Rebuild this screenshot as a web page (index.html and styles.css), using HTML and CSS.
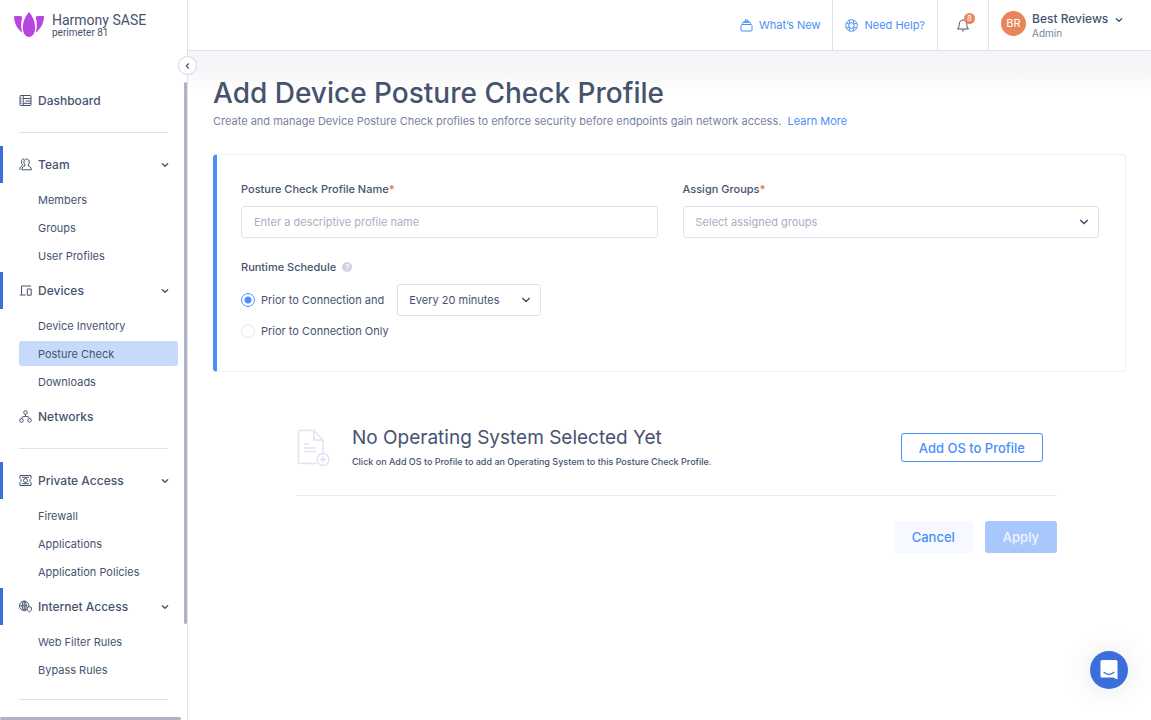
FILE: index.html
```html
<!DOCTYPE html>
<html lang="en">
<head>
<meta charset="utf-8">
<meta name="viewport" content="width=device-width, initial-scale=1">
<title>Add Device Posture Check Profile</title>
<link rel="stylesheet" href="styles.css">
</head>
<body>
<svg width="0" height="0" class="defs" aria-hidden="true">
  <symbol id="chevron" viewBox="0 0 10 10"><path d="M2.300 3.700 5 6.300 7.700 3.700" fill="none" stroke="currentColor" stroke-width="1.300" stroke-linecap="round" stroke-linejoin="round"/></symbol>
</svg>
<div class="app">
  <aside class="sidebar">
    <div class="brand">
      <svg class="brand-mark" viewBox="0 0 30 26" aria-hidden="true">
        <g fill="#b845e0">
          <path d="M15 0C18 3.500 21.200 9 21.200 16c0 5-2.800 9-6.200 9s-6.200-4-6.200-9C8.800 9 12 3.500 15 0z"/>
          <path d="M0 4.300c2.400-.3 5-.3 8 .3v1.800C7 10 6.600 14.500 8.200 20.600 3.500 17 .2 12 0 4.300z"/>
          <path d="M30 4.300c-2.400-.3-5-.3-8 .3v1.800c1 3.600 1.400 8.100-.2 14.200C26.500 17 29.800 12 30 4.300z"/>
        </g>
      </svg>
      <div class="brand-text"><span class="brand-name">Harmony SASE</span><span class="brand-sub">perimeter 81</span></div>
    </div>
    <nav class="nav" aria-label="Main">
      <a class="nav-head" href="#">
        <svg class="nav-icon" viewBox="0 0 13 13"><rect x="1" y="1.500" width="11" height="10" rx=".8"/><path d="M4.200 1.500v10M4.200 4.500H12M6.500 7H12M4.200 9.300H12M1 4.500h1.500M1 7h1.500M1 9.300h1.500"/></svg>
        <span>Dashboard</span></a>
      <hr class="rule">
      <button class="nav-head open" type="button">
        <svg class="nav-icon" viewBox="0 0 13 13"><path d="M7.600 1.100c1.700 0 2.700 1.200 2.700 2.900 0 1.400-.5 2.400-1.100 3v.9c1.500.4 3 1 3.100 3.900H2.900C3 8.900 4.500 8.300 6 7.900V7c-.6-.6-1.100-1.600-1.100-3 0-1.700 1-2.900 2.700-2.900zM5.200 1C3.500.8 2.400 2 2.400 3.900c0 1.300.4 2.300 1 2.900v.7C2 8.200.8 9 .8 11.800"/></svg>
        <span>Team</span><svg class="chev"><use href="#chevron"/></svg></button>
      <div class="sub"><a href="#">Members</a><a href="#">Groups</a><a href="#">User Profiles</a></div>
      <button class="nav-head open" type="button">
        <svg class="nav-icon" viewBox="0 0 13 13"><path d="M12 2H2.500v8.800M.7 11h5.800M8.300 5h3.900v6.200H8.300z"/></svg>
        <span>Devices</span><svg class="chev"><use href="#chevron"/></svg></button>
      <div class="sub"><a href="#">Device Inventory</a><a class="active" href="#" aria-current="page">Posture Check</a><a href="#">Downloads</a></div>
      <a class="nav-head" href="#">
        <svg class="nav-icon" viewBox="0 0 13 13"><circle cx="6.500" cy="2.500" r="1.800"/><circle cx="2.500" cy="10.400" r="1.800"/><circle cx="10.500" cy="10.400" r="1.800"/><path d="M6.500 4.300v2.200M2.500 8.600C2.600 6.800 4.500 6.500 6.500 6.500s3.900.3 4 2.100"/></svg>
        <span>Networks</span></a>
      <hr class="rule">
      <button class="nav-head open" type="button">
        <svg class="nav-icon" viewBox="0 0 13 13"><path d="M1 4.500v-3h11v3M1 8.500v3h11v-3M1 4.500l1 1v2l-1 1M12 4.500l-1 1v2l1 1M3 3.300h7M3 9.700h7"/><circle cx="6.500" cy="6.500" r="2"/></svg>
        <span>Private Access</span><svg class="chev"><use href="#chevron"/></svg></button>
      <div class="sub"><a href="#">Firewall</a><a href="#">Applications</a><a href="#">Application Policies</a></div>
      <button class="nav-head open" type="button">
        <svg class="nav-icon" viewBox="0 0 13 13"><circle cx="5.200" cy="5.800" r="4.700"/><ellipse cx="5.200" cy="5.800" rx="2" ry="4.700"/><path d="M.5 5.800h8M5.200 1v9.500"/><path class="shield" d="M10.300 6.700 8.200 7.500v1.800c0 1.300 1 2.100 2.100 2.600 1.100-.5 2.100-1.300 2.100-2.600V7.500z"/></svg>
        <span>Internet Access</span><svg class="chev"><use href="#chevron"/></svg></button>
      <div class="sub"><a href="#">Web Filter Rules</a><a href="#">Bypass Rules</a></div>
      <hr class="rule">
    </nav>
    <span class="scroll-y"></span><span class="scroll-x"></span>
    <button class="collapse" type="button" aria-label="Collapse menu"><svg viewBox="0 0 10 10"><path d="M5.800 2.500 3.300 5l2.500 2.500" fill="none" stroke="currentColor" stroke-width="1.200"/></svg></button>
  </aside>

  <div class="page">
    <header class="topbar">
      <a class="top-cell" href="#">
        <svg viewBox="0 0 13 13"><rect x="1" y="5.500" width="11" height="6.500" rx="1"/><path d="M2.500 5.500V4.200a.8.800 0 0 1 .8-.8h6.400a.8.800 0 0 1 .8.800v1.300M4 3.400V2.200h5v1.200M5.500 2.200V.9h2v1.300"/></svg>
        <span>What’s New</span></a>
      <a class="top-cell" href="#">
        <svg viewBox="0 0 13 13"><circle cx="6.500" cy="6.500" r="5.800"/><circle cx="6.500" cy="6.500" r="2.800"/><path d="M4 1.300 5 4.200M9 1.300 8 4.200M4 11.700l1-2.900M9 11.700l-1-2.900M1.300 4l2.900 1M1.300 9l2.900-1M11.700 4 8.800 5M11.700 9 8.800 8"/></svg>
        <span>Need Help?</span></a>
      <button class="top-cell bell" type="button" aria-label="Notifications">
        <svg viewBox="0 0 14 14"><path d="M1.500 11h11c-1.300-1.300-1.700-2.400-1.700-4.500C10.800 3.800 9.200 2 7 2S3.200 3.800 3.200 6.500c0 2.100-.4 3.200-1.700 4.500zM5.700 12.200c.6 1 2 1 2.600 0"/></svg>
        <span class="badge">8</span></button>
      <button class="top-cell user" type="button">
        <span class="avatar">BR</span>
        <span class="who"><span class="who-name">Best Reviews</span><span class="who-role">Admin</span></span>
        <svg class="chev"><use href="#chevron"/></svg></button>
    </header>

    <main class="main">
      <h1>Add Device Posture Check Profile</h1>
      <p class="lead">Create and manage Device Posture Check profiles to enforce security before endpoints gain network access. <a href="#">Learn More</a></p>

      <form class="card">
        <div class="fields">
          <div class="field">
            <label for="name">Posture Check Profile Name<b>*</b></label>
            <input class="control" id="name" type="text" placeholder="Enter a descriptive profile name">
          </div>
          <div class="field">
            <label for="groups">Assign Groups<b>*</b></label>
            <div class="select"><select class="control empty-value" id="groups"><option>Select assigned groups</option></select><svg><use href="#chevron"/></svg></div>
          </div>
        </div>
        <fieldset class="schedule">
          <legend>Runtime Schedule <span class="hint">?</span></legend>
          <div class="option first">
            <label><input type="radio" name="run" checked>Prior to Connection and</label>
            <div class="select short"><select class="control" aria-label="Interval"><option>Every 20 minutes</option></select><svg><use href="#chevron"/></svg></div>
          </div>
          <div class="option"><label><input type="radio" name="run">Prior to Connection Only</label></div>
        </fieldset>
      </form>

      <section class="os">
        <div class="empty">
          <svg class="doc" viewBox="0 0 34 38" aria-hidden="true"><path d="M20.500 34.500H3.500a1 1 0 0 1-1-1v-31a1 1 0 0 1 1-1H18l9 9.500v13"/><path d="M18 1.500V11h9"/><path d="M8 15h5M8 19h12M8 22.500h12"/><circle cx="27" cy="30.500" r="6"/><path d="M27 27.500v6M24 30.500h6"/></svg>
          <div class="empty-text"><h2>No Operating System Selected Yet</h2><p>Click on Add OS to Profile to add an Operating System to this Posture Check Profile.</p></div>
          <button class="btn outline" type="button">Add OS to Profile</button>
        </div>
        <div class="actions">
          <button class="btn soft" type="button">Cancel</button>
          <button class="btn solid" type="button">Apply</button>
        </div>
      </section>
    </main>
  </div>
</div>
<button class="chat" type="button" aria-label="Open chat"><svg viewBox="0 0 18 20"><path d="M2 0h14a1.500 1.500 0 0 1 1.500 1.500V19.500L13 17.500H2A1.500 1.500 0 0 1 .5 16V1.500A1.500 1.500 0 0 1 2 0z" fill="#fff"/><path d="M4 12.200c3 2.600 7 2.600 10 0" fill="none" stroke="#3c6edb" stroke-width="1.200" stroke-linecap="round"/></svg></button>
</body>
</html>
```

FILE: styles.css
```css
* { box-sizing: border-box; }
:root {
  --ink: #46536f;
  --muted: #7883a0;
  --blue: #4a8ff7;
  --line: #dfe1ec;
}
body {
  margin: 0;
  font-family: Inter, "Liberation Sans", sans-serif;
  font-size: 11px;
  line-height: 16px;
  color: var(--ink);
  background: #fff;
}
a { color: inherit; text-decoration: none; }
button { font: inherit; color: inherit; background: none; border: 0; padding: 0; cursor: pointer; }
svg { flex: none; }
.defs { position: absolute; }
.chev { width: 10px; height: 10px; }

.app { display: flex; height: 100vh; }

/* Sidebar */
.sidebar {
  position: relative;
  flex: none;
  width: 188px;
  border-right: 1px solid var(--line);
}
.brand { display: flex; height: 82px; padding: 12px 14px; gap: 8px; }
.brand-mark { width: 30px; height: 26px; }
.brand-text { display: flex; flex-direction: column; font-family: Roboto, sans-serif; }
.brand-name { font-size: 14px; line-height: 16px; }
.brand-sub { font-size: 10px; line-height: 10px; }
.nav { display: flex; flex-direction: column; }
.nav-head {
  display: flex;
  align-items: center;
  gap: 6px;
  height: 37px;
  padding: 0 17px 0 19px;
  font-size: 12px;
  font-weight: 500;
  text-align: left;
}
.nav-head.open { padding-left: 16px; border-left: 3px solid #3c6edb; border-radius: 0 3px 3px 0; }
.nav-head .chev { margin-left: auto; }
.nav-icon { width: 13px; height: 13px; fill: none; stroke: currentColor; stroke-width: 1; }
.nav-icon .shield { fill: #fff; }
.sub { display: flex; flex-direction: column; gap: 3px; padding: 4px 9px 4px 19px; }
.sub a { height: 25px; padding-left: 19px; line-height: 26px; border-radius: 3px; }
.sub a.active { background: #c6dbfc; }
.rule { width: 149px; height: 1px; margin: 13px 19px; border: 0; background: var(--line); }
.scroll-y { position: absolute; top: 82px; right: 0; width: 3px; height: 542px; border-radius: 2px; background: #aeb4c4; }
.scroll-x { position: absolute; bottom: 0; left: 0; width: 181px; height: 3px; border-radius: 2px; background: #aeb4c4; }
.collapse {
  position: absolute;
  top: 56px;
  right: -10px;
  display: grid;
  place-items: center;
  width: 19px;
  height: 19px;
  border: 1px solid #d3d6e3;
  border-radius: 50%;
  background: #fff;
}
.collapse svg { width: 10px; height: 10px; }

/* Top bar */
.page { flex: 1; min-width: 0; display: flex; flex-direction: column; }
.topbar { display: flex; justify-content: flex-end; height: 51px; border-bottom: 1px solid var(--line); }
.top-cell { display: flex; align-items: center; gap: 6px; padding: 0 12px; color: var(--blue); }
.top-cell + .top-cell { border-left: 1px solid var(--line); }
.top-cell > svg { width: 13px; height: 13px; fill: none; stroke: currentColor; stroke-width: 1; }
.bell { position: relative; padding: 0 18px; color: var(--ink); }
.bell > svg { width: 14px; height: 14px; }
.badge {
  position: absolute;
  top: 13px;
  right: 13px;
  width: 11px;
  height: 11px;
  border-radius: 50%;
  background: #e8855a;
  color: #fff;
  font-size: 8px;
  line-height: 11px;
  text-align: center;
}
.user { width: 163px; align-items: flex-start; padding-top: 11px; color: var(--ink); text-align: left; }
.user > .chev { width: 10px; height: 10px; margin-top: 4px; }
.avatar { width: 25px; height: 25px; border-radius: 50%; background: #e8855a; color: #fff; line-height: 25px; text-align: center; }
.who { display: flex; flex-direction: column; }
.who-name { font-size: 12px; font-weight: 500; }
.who-role { font-size: 10px; line-height: 12px; color: var(--muted); }

/* Content */
.main { flex: 1; padding: 24px 25px; background: linear-gradient(#f5f5f9, #f7f7fa 20px, #fff 42px); }
h1 { margin: 0; font-size: 28px; line-height: 36px; font-weight: 500; }
.lead { margin: 2px 0 25px; color: var(--muted); }
.lead a { margin-left: 3px; color: var(--blue); }
.card {
  padding: 26px 26px 32px 24px;
  border: 1px solid #f0f1f7;
  border-left: 4px solid var(--blue);
  border-radius: 4px;
}
.fields { display: grid; grid-template-columns: 1fr 1fr; gap: 25px; }
.field { display: flex; flex-direction: column; gap: 9px; }
.field label, legend { font-weight: 500; }
.field b { color: #f0743e; }
.control {
  width: 100%;
  height: 32px;
  padding: 0 12px;
  border: 1px solid var(--line);
  border-radius: 3px;
  background: #fff;
  color: var(--ink);
  font: inherit;
  appearance: none;
}
.control::placeholder, .control.empty-value { color: #a9afc2; opacity: 1; }
.select { display: grid; align-items: center; }
.select > * { grid-area: 1 / 1; }
.select svg { justify-self: end; width: 12px; height: 12px; margin-right: 9px; pointer-events: none; }
.select.short { width: 144px; }
.select.short .control { padding: 0 11px; }
.schedule { margin: 21px 0 0; padding: 0; border: 0; }
legend { display: flex; align-items: center; gap: 6px; padding: 0; }
.hint { width: 10px; height: 10px; border-radius: 50%; background: #cfd2de; color: #fff; font-size: 8px; line-height: 10px; text-align: center; }
.option { display: flex; align-items: center; gap: 13px; }
.option.first { margin: 9px 0 7px; }
.option label { display: flex; align-items: center; gap: 6px; }
.option input {
  appearance: none;
  width: 14px;
  height: 14px;
  margin: 0;
  border: 1px solid var(--line);
  border-radius: 50%;
}
.option input:checked { border-color: var(--blue); background: radial-gradient(circle, var(--blue) 3px, #fff 4px); }

.os { padding: 54px 69px 0 83px; }
.empty { display: flex; align-items: center; padding: 0 14px 26px 0; border-bottom: 1px solid #e9eaf2; }
.doc { width: 34px; height: 38px; margin-right: 22px; fill: none; stroke: #e0e4f2; stroke-width: 1.5; }
.empty-text { flex: 1; }
h2 { margin: 0 0 5px; font-size: 19px; line-height: 24px; font-weight: 400; }
.empty-text p { margin: 0; font-size: 9px; line-height: 14px; font-weight: 500; }
.btn { height: 32px; padding: 0 18px; border-radius: 3px; font-size: 13px; font-weight: 500; }
.outline { height: 29px; padding: 0 17px; border: 1px solid var(--blue); color: var(--blue); }
.soft { background: #f6f9ff; color: var(--blue); }
.solid { background: #a8c8fd; color: #eef4ff; }
.actions { display: flex; justify-content: flex-end; gap: 12px; padding-top: 25px; }

.chat {
  position: fixed;
  right: 23px;
  bottom: 31px;
  display: grid;
  place-items: center;
  width: 38px;
  height: 38px;
  border-radius: 50%;
  background: #3c6edb;
  box-shadow: 0 1px 28px rgba(60, 70, 100, .14);
}
.chat svg { width: 18px; height: 20px; }
```
